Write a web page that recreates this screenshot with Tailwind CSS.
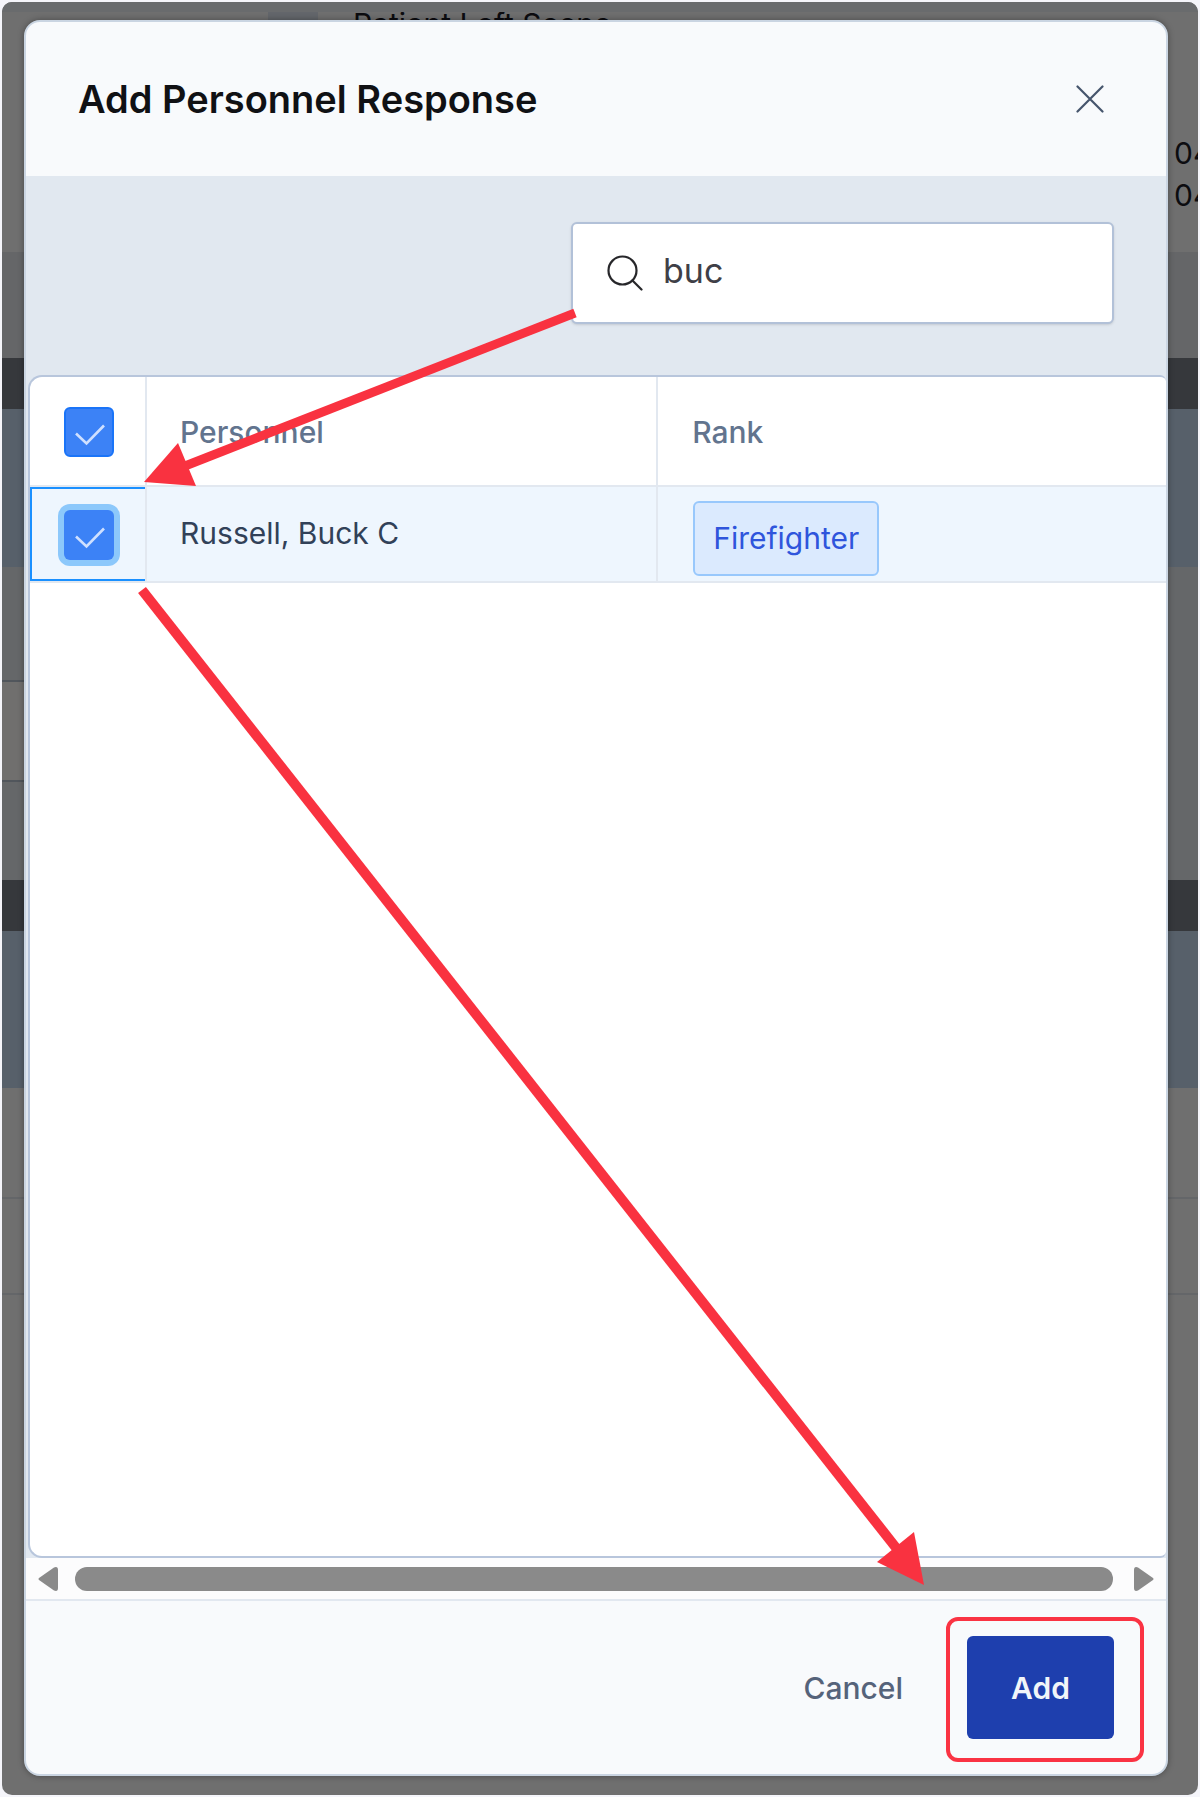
<!DOCTYPE html>
<html lang="en">
<head>
<meta charset="utf-8">
<title>Add Personnel Response</title>
<script src="https://cdn.jsdelivr.net/npm/@tailwindcss/browser@4"></script>
</head>
<body class="bg-[#f5f5fa] font-['Inter',sans-serif]">
<div class="relative flex min-h-screen flex-col p-0.5">

  <!-- dimmed page behind the dialog -->
  <div class="absolute inset-0.5 flex flex-col overflow-hidden rounded-[10px] bg-[#6f6f6f] text-3xl text-[#0c0c10]" aria-hidden="true">
    <div class="h-[250px] overflow-hidden border-t-[10px] border-[#696b6d]">
      <div class="flex h-[80px] items-start gap-[35px] pl-[266px]">
        <div class="h-10 w-[50px] bg-[#63666b]"></div>
        <div class="-mt-1.5 leading-9">Patient Left Scene</div>
      </div>
      <div class="flex flex-col items-end pt-10 leading-[42px]">
        <div class="w-6 overflow-hidden">04</div>
        <div class="w-6 overflow-hidden">04</div>
      </div>
    </div>
    <div class="h-[106px] bg-[#656668]"></div>
    <div class="h-[51px] bg-[#36383c]"></div>
    <div class="h-[158px] bg-[#57606a]"></div>
    <div class="flex h-[313px] bg-[#656769]">
      <div class="flex w-[22px] flex-col">
        <div class="h-[115px] border-b-2 border-[#51565c]"></div>
        <div class="h-[100px] border-b-2 border-[#51565c] bg-[#706f6e]"></div>
      </div>
    </div>
    <div class="h-[51px] bg-[#36383c]"></div>
    <div class="h-[157px] bg-[#57606a]"></div>
    <div class="h-[111px] border-b-2 border-[#646669]"></div>
    <div class="h-24 border-b-2 border-[#646669]"></div>
  </div>

  <div role="dialog" aria-labelledby="dialog-title" class="relative mt-[18px] mr-[30px] mb-[19px] ml-[22px] flex flex-1 flex-col overflow-hidden rounded-[16px] border-2 border-slate-300 bg-slate-50 shadow-[0_0_6px_rgba(0,0,0,0.35)]">
    <header class="flex h-[154px] shrink-0 items-center justify-between pr-[62px] pl-[52px]">
      <h1 id="dialog-title" class="text-[38px] leading-[44px] font-semibold text-[#101114]">Add Personnel Response</h1>
      <button type="button" aria-label="Close" class="text-slate-600">
        <svg class="size-7" viewBox="0 0 28 28" fill="none" stroke="currentColor" stroke-width="2.2" stroke-linecap="round"><path d="M1.5 1.5l25 25M26.500 1.5l-25 25"/></svg>
      </button>
    </header>

    <main class="flex flex-1 flex-col bg-[#e1e8f0]">
      <div class="flex h-[199px] shrink-0 items-start justify-end pt-[46px] pr-[52px]">
        <label class="flex h-[102px] w-[543px] items-center gap-5 rounded-md border-2 border-[#b2c1d8] bg-white pl-[34px] shadow-sm">
          <svg class="size-9 shrink-0" viewBox="0 0 36 36" fill="none" stroke="#27272a" stroke-width="2.2" stroke-linecap="round"><circle cx="15.500" cy="15.500" r="14"/><path d="M25.500 25.500l9 9"/></svg>
          <input type="text" value="buc" aria-label="Search personnel" class="w-full bg-transparent pb-1 text-[34px] leading-10 text-zinc-700 outline-none">
        </label>
      </div>

      <div class="ml-0.5 flex-1 rounded-l-[14px] rounded-r-md border-y-2 border-l-2 border-[#b8c6dc] bg-white">
        <table class="w-full table-fixed border-separate border-spacing-0 text-left">
          <thead>
            <tr class="h-[110px] text-3xl text-slate-500">
              <th scope="col" class="w-[117px] border-r-2 border-b-2 border-slate-200 pt-0.5 pl-[34px] align-middle">
                <span class="grid size-[50px]">
                  <input type="checkbox" checked aria-label="Select all" class="col-start-1 row-start-1 size-[50px] appearance-none rounded-md border-2 border-[#1a74f8] bg-[#3c82f6]">
                  <svg class="pointer-events-none col-start-1 row-start-1 size-[50px]" viewBox="0 0 50 50" fill="none" stroke="#cfe0ff" stroke-width="2.6"><path d="M12 26.500l10.500 10L40 18.500"/></svg>
                </span>
              </th>
              <th scope="col" class="w-[45%] border-r-2 border-b-2 border-slate-200 pt-0.5 pl-[33px] font-medium">Personnel</th>
              <th scope="col" class="border-b-2 border-slate-200 pt-0.5 pl-[34px] font-medium">Rank</th>
            </tr>
          </thead>
          <tbody>
            <tr class="h-24 bg-[#eef6fe] text-3xl">
              <td class="border-r-2 border-b-2 border-slate-200 pt-0.5 pl-[34px] shadow-[inset_2px_0_0_#1a90ff,inset_0_2px_0_#1a90ff,inset_0_-2px_0_#1a90ff]">
                <span class="grid size-[50px]">
                  <input type="checkbox" checked aria-label="Select Russell, Buck C" class="col-start-1 row-start-1 size-[50px] appearance-none rounded-md bg-[#3c82f6] ring-[6px] ring-[#8cc8fb]">
                  <svg class="pointer-events-none relative col-start-1 row-start-1 size-[50px]" viewBox="0 0 50 50" fill="none" stroke="#cfe0ff" stroke-width="2.6"><path d="M12 26.500l10.500 10L40 18.500"/></svg>
                </span>
              </td>
              <td class="border-r-2 border-b-2 border-slate-200 pb-0.5 pl-[33px] text-slate-700">Russell, Buck C</td>
              <td class="border-b-2 border-slate-200 pt-2 pl-[35px] align-middle">
                <span class="flex h-[75px] w-fit items-center rounded-md border-2 border-[#98c8fc] bg-blue-100 px-[18px] text-[#2f55dc]">Firefighter</span>
              </td>
            </tr>
          </tbody>
        </table>
      </div>

      <!-- horizontal scrollbar -->
      <div class="flex h-[41px] shrink-0 items-center gap-[17px] bg-[#fcfcfd] px-3">
        <svg class="h-6 w-5 shrink-0" viewBox="0 0 20 24" fill="#8a8a8a"><path d="M1 11Q0 12 1 13L16 23.500Q20 25 20 21V3Q20-1 16 .5Z"/></svg>
        <div class="h-6 flex-1 rounded-full bg-[#8a8a8a]"></div>
        <svg class="ml-1 h-6 w-5 shrink-0" viewBox="0 0 20 24" fill="#8a8a8a"><path d="M19 11Q20 12 19 13L4 23.500Q0 25 0 21V3Q0-1 4 .5Z"/></svg>
      </div>
    </main>

    <footer class="flex h-[175px] shrink-0 items-center justify-end gap-[64px] border-t-2 border-slate-200 pr-[52px]">
      <button type="button" class="text-3xl font-medium text-[#55637a]">Cancel</button>
      <div class="relative">
        <button type="button" class="h-[103px] w-[147px] rounded-md bg-[#1e3fae] text-3xl font-semibold text-slate-100">Add</button>
        <span class="pointer-events-none absolute -top-[19px] -right-[30px] -bottom-[23px] -left-[21px] rounded-xl border-4 border-[#fa3343]"></span>
      </div>
    </footer>
  </div>

  <!-- callout arrows -->
  <svg class="pointer-events-none absolute inset-0 size-full" viewBox="0 0 1200 1797" preserveAspectRatio="none" fill="#f93240" stroke="#f93240" aria-hidden="true">
    <path d="M575 313L185 466" stroke-width="9"/>
    <path d="M144 482L178 443L196 486Z" stroke="none"/>
    <path d="M142 590L897 1549" stroke-width="10"/>
    <path d="M924 1585L877 1562L914 1532Z" stroke="none"/>
  </svg>
</div>
</body>
</html>
